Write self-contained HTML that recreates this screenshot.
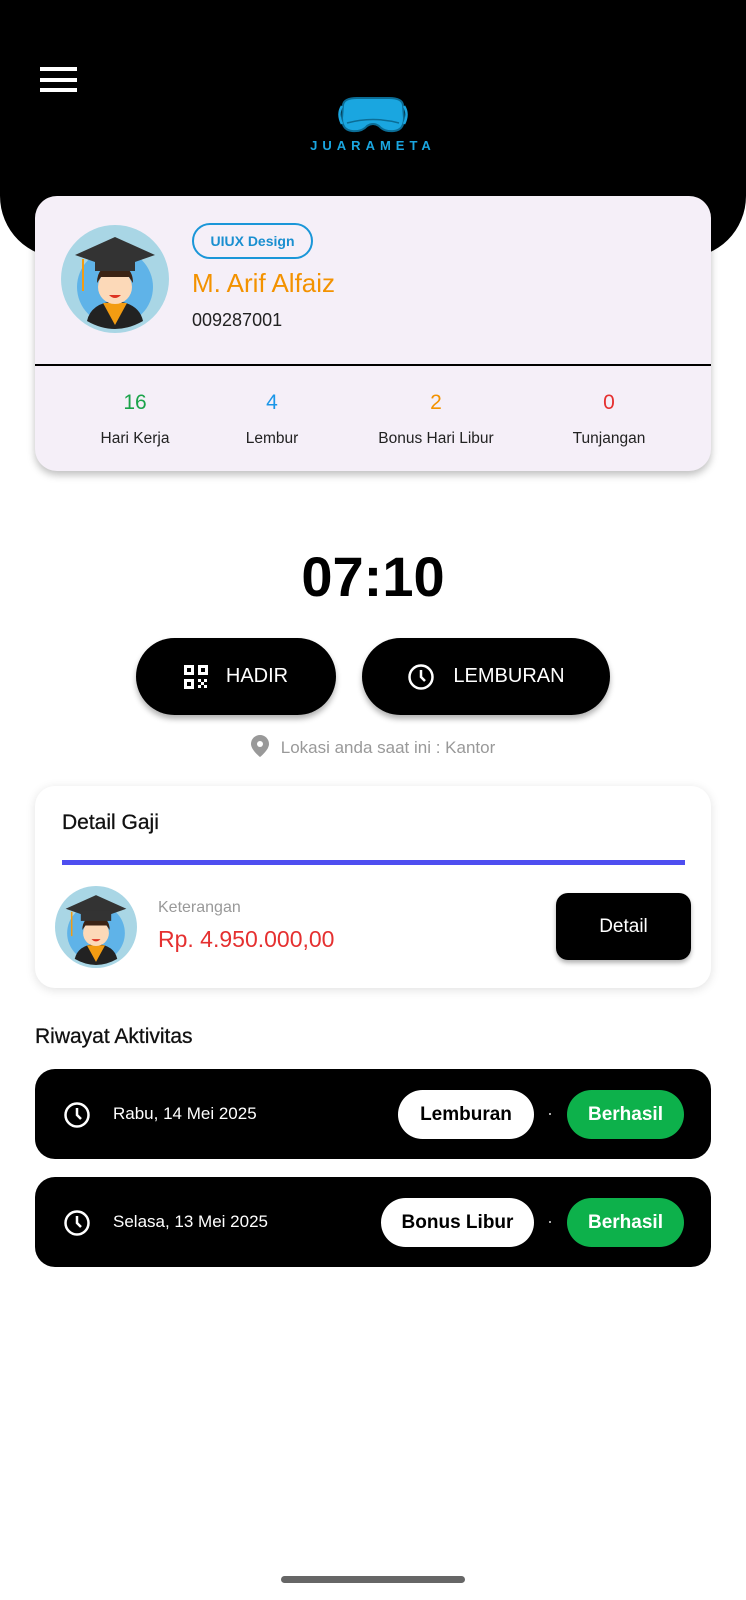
<!DOCTYPE html>
<html><head><meta charset="utf-8"><style>
*{margin:0;padding:0;box-sizing:border-box}
body{width:746px;height:1600px;background:#fff;font-family:"Liberation Sans",sans-serif;position:relative;overflow:hidden;color:#222}
.abs{position:absolute}
.hdr{left:0;top:0;width:746px;height:258px;background:#000;border-radius:0 0 62px 62px}
.ham span{position:absolute;left:40px;width:37px;height:4px;background:#fff}
.card{left:35px;top:196px;width:676px;height:275px;background:#f5eff8;border-radius:22px;box-shadow:0 4px 8px rgba(0,0,0,.25)}
.stat{position:absolute;width:160px;text-align:center}
.stat b{display:block;font-weight:normal;font-size:21px}
.stat span{display:block;font-size:15.5px;color:#222;margin-top:15px}
.btn{background:#000;color:#fff;border-radius:40px;box-shadow:0 4px 6px rgba(0,0,0,.3);display:flex;align-items:center;justify-content:center;font-size:20px;gap:18px}
.row{left:35px;width:676px;height:90px;background:#000;border-radius:20px}
.chip{position:absolute;top:21px;height:49px;border-radius:25px;display:flex;align-items:center;justify-content:center;font-size:19px;font-weight:bold}
</style></head><body>
<div class="abs hdr"></div>
<div class="abs ham"><span style="top:67px"></span><span style="top:78px"></span><span style="top:88px"></span></div>
<svg class="abs" style="left:337px;top:96px" width="72" height="40" viewBox="0 0 72 40"><path d="M6 9 Q7 2 20 2 H52 Q65 2 66 9 L67 22 Q67 34 57 35 Q47 36 42 30 Q36 26 30 30 Q25 36 15 35 Q5 34 5 22 Z" fill="#1aa6e0" stroke="#0b6d96" stroke-width="2"/><path d="M5 10 Q0 18 5 28 M67 10 Q72 18 67 28" stroke="#1aa6e0" stroke-width="2.5" fill="none"/><path d="M10 27 Q36 20 62 27" stroke="#0b6d96" stroke-width="1.5" fill="none"/></svg>
<div class="abs" style="left:300px;top:138px;width:146px;text-align:center;color:#1aa6e0;font-size:13px;font-weight:bold;letter-spacing:5px">JUARAMETA</div>

<div class="abs card">
<svg class="abs" style="left:26px;top:29px" width="108" height="108" viewBox="0 0 108 108"><circle cx="54" cy="54" r="54" fill="#a9d6e5"/><circle cx="54" cy="62" r="38" fill="#5fb3e8"/><path d="M26 96 Q30 78 54 76 Q78 78 82 96 Q68 104 54 104 Q40 104 26 96Z" fill="#222"/><path d="M42 78 L54 100 L66 78 Z" fill="#f39c12"/><circle cx="54" cy="62" r="17" fill="#fcd9b8"/><path d="M36 58 Q36 40 54 40 Q72 40 72 58 L68 52 L40 52Z" fill="#3b2314"/><path d="M14 30 L54 12 L94 30 L54 44 Z" fill="#333"/><rect x="34" y="32" width="40" height="14" fill="#333"/><path d="M22 34 V66" stroke="#f39c12" stroke-width="2"/><path d="M48 70 Q54 76 60 70Z" fill="#d32"/></svg>
<div class="abs" style="left:157px;top:27px;width:121px;height:36px;border:2px solid #1a96d8;border-radius:18px;color:#1a8fd0;font-size:14px;font-weight:bold;display:flex;align-items:center;justify-content:center">UIUX Design</div>
<div class="abs" style="left:157px;top:72px;font-size:26px;color:#f39200">M. Arif Alfaiz</div>
<div class="abs" style="left:157px;top:114px;font-size:18px;color:#222">009287001</div>
<div class="abs" style="left:0;top:168px;width:676px;height:2px;background:#000"></div>
<div class="stat" style="left:20px;top:195px"><b style="color:#1aa34a">16</b><span>Hari Kerja</span></div>
<div class="stat" style="left:157px;top:195px"><b style="color:#1a96e8">4</b><span>Lembur</span></div>
<div class="stat" style="left:321px;top:195px"><b style="color:#f39200">2</b><span>Bonus Hari Libur</span></div>
<div class="stat" style="left:494px;top:195px"><b style="color:#e53030">0</b><span>Tunjangan</span></div>
</div>

<div class="abs" style="left:0;top:544px;width:746px;text-align:center;font-size:56px;font-weight:bold;color:#000">07:10</div>
<div class="abs btn" style="left:136px;top:638px;width:200px;height:77px"><svg width="24" height="24" viewBox="0 0 24 24" fill="#fff"><path d="M0 0h10v10H0zM3 3v4h4V3zM14 0h10v10H14zM17 3v4h4V3zM0 14h10v10H0zM3 17v4h4v-4z" fill-rule="evenodd"/><rect x="14" y="14" width="3" height="3"/><rect x="20" y="14" width="3" height="3"/><rect x="17" y="17" width="3" height="3"/><rect x="14" y="20" width="3" height="3"/><rect x="20" y="20" width="3" height="3"/></svg>HADIR</div>
<div class="abs btn" style="left:362px;top:638px;width:248px;height:77px"><svg width="28" height="28" viewBox="0 0 28 28"><circle cx="14" cy="14" r="11.5" fill="none" stroke="#fff" stroke-width="2.5"/><path d="M14 7v7l4 4" stroke="#fff" stroke-width="2.5" fill="none"/></svg>LEMBURAN</div>
<div class="abs" style="left:0;top:735px;width:746px;text-align:center;color:#999;font-size:17px"><svg width="18" height="22" viewBox="0 0 18 22" style="vertical-align:-4px;margin-right:12px"><path d="M9 0C4 0 0 4 0 9c0 6 9 13 9 13s9-7 9-13c0-5-4-9-9-9z" fill="#999"/><circle cx="9" cy="9" r="3" fill="#fff"/></svg>Lokasi anda saat ini : Kantor</div>

<div class="abs" style="left:35px;top:786px;width:676px;height:202px;background:#fff;border-radius:20px;box-shadow:0 2px 10px rgba(0,0,0,.12)">
<div class="abs" style="left:27px;top:25px;font-size:21px;color:#111;-webkit-text-stroke:0.3px #111">Detail Gaji</div>
<div class="abs" style="left:27px;top:74px;width:623px;height:5px;background:#4e4ef0"></div>
<svg class="abs" style="left:20px;top:100px" width="82" height="82" viewBox="0 0 108 108"><circle cx="54" cy="54" r="54" fill="#a9d6e5"/><circle cx="54" cy="62" r="38" fill="#5fb3e8"/><path d="M26 96 Q30 78 54 76 Q78 78 82 96 Q68 104 54 104 Q40 104 26 96Z" fill="#222"/><path d="M42 78 L54 100 L66 78 Z" fill="#f39c12"/><circle cx="54" cy="62" r="17" fill="#fcd9b8"/><path d="M36 58 Q36 40 54 40 Q72 40 72 58 L68 52 L40 52Z" fill="#3b2314"/><path d="M14 30 L54 12 L94 30 L54 44 Z" fill="#333"/><rect x="34" y="32" width="40" height="14" fill="#333"/><path d="M22 34 V66" stroke="#f39c12" stroke-width="2"/><path d="M48 70 Q54 76 60 70Z" fill="#d32"/></svg>
<div class="abs" style="left:123px;top:113px;font-size:16px;color:#999">Keterangan</div>
<div class="abs" style="left:123px;top:140px;font-size:23px;color:#e53030">Rp. 4.950.000,00</div>
<div class="abs" style="left:521px;top:107px;width:135px;height:67px;background:#000;color:#fff;border-radius:12px;font-size:19px;display:flex;align-items:center;justify-content:center;box-shadow:0 3px 5px rgba(0,0,0,.3)">Detail</div>
</div>

<div class="abs" style="left:35px;top:1025px;font-size:21px;color:#111;-webkit-text-stroke:0.3px #111">Riwayat Aktivitas</div>
<div class="abs row" style="top:1069px">
<svg class="abs" style="left:28px;top:32px" width="28" height="28" viewBox="0 0 28 28"><circle cx="14" cy="14" r="11.5" fill="none" stroke="#fff" stroke-width="2.5"/><path d="M14 7v7l4 4" stroke="#fff" stroke-width="2.5" fill="none"/></svg>
<div class="abs" style="left:78px;top:35px;color:#fff;font-size:17px">Rabu, 14 Mei 2025</div>
<div class="chip" style="left:363px;width:136px;background:#fff;color:#000">Lemburan</div>
<div class="abs" style="left:514px;top:44px;width:2px;height:2px;background:#aaa"></div>
<div class="chip" style="left:532px;width:117px;background:#0db14b;color:#fff">Berhasil</div>
</div>
<div class="abs row" style="top:1177px">
<svg class="abs" style="left:28px;top:32px" width="28" height="28" viewBox="0 0 28 28"><circle cx="14" cy="14" r="11.5" fill="none" stroke="#fff" stroke-width="2.5"/><path d="M14 7v7l4 4" stroke="#fff" stroke-width="2.5" fill="none"/></svg>
<div class="abs" style="left:78px;top:35px;color:#fff;font-size:17px">Selasa, 13 Mei 2025</div>
<div class="chip" style="left:346px;width:153px;background:#fff;color:#000">Bonus Libur</div>
<div class="abs" style="left:514px;top:44px;width:2px;height:2px;background:#aaa"></div>
<div class="chip" style="left:532px;width:117px;background:#0db14b;color:#fff">Berhasil</div>
</div>
<div class="abs" style="left:281px;top:1576px;width:184px;height:7px;border-radius:4px;background:#666"></div>
</body></html>
